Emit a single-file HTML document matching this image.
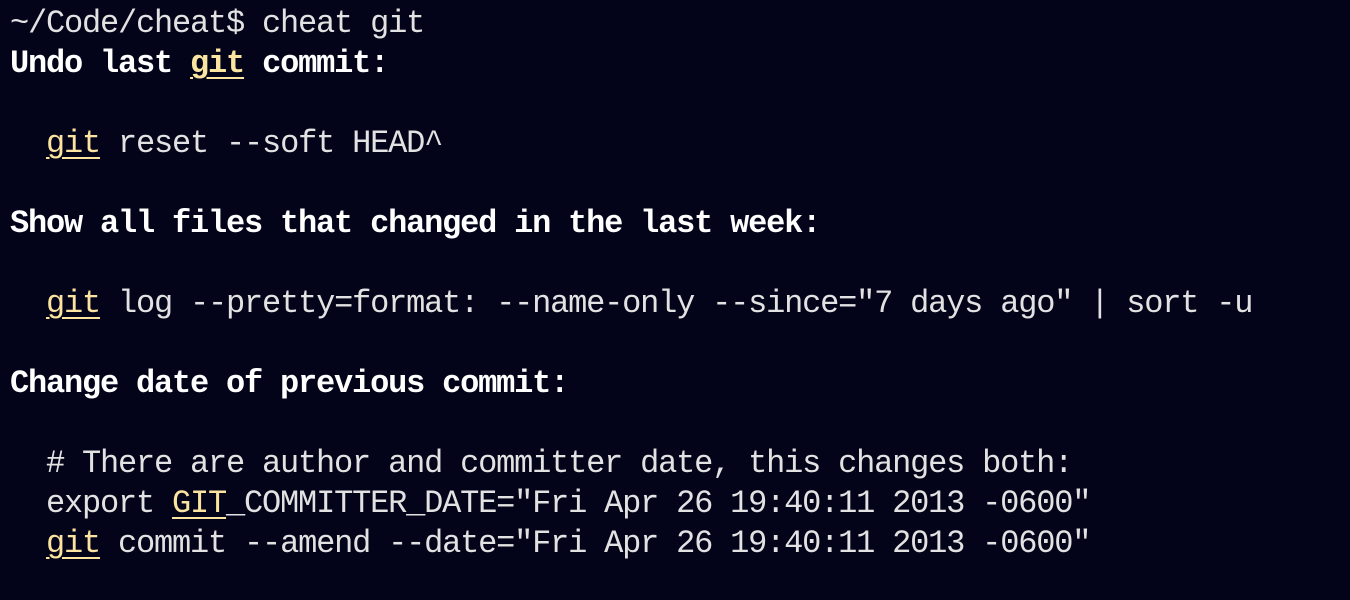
<!DOCTYPE html>
<html><head><meta charset="utf-8"><style>
html,body{margin:0;padding:0;background:#03031a;width:1350px;height:600px;overflow:hidden}
pre{margin:0;position:absolute;left:10px;top:4px;font-family:"Liberation Mono",monospace;font-size:32px;line-height:40px;color:#e2e2e2;letter-spacing:-1.2px}
b{color:#fff;font-weight:bold}
u{color:#fbe3a0;text-decoration:underline;text-underline-offset:5px;text-decoration-thickness:2px}
</style></head><body><pre>~/Code/cheat$ cheat git
<b>Undo last <u>git</u> commit:</b>

  <u>git</u> reset --soft HEAD^

<b>Show all files that changed in the last week:</b>

  <u>git</u> log --pretty=format: --name-only --since="7 days ago" | sort -u

<b>Change date of previous commit:</b>

  # There are author and committer date, this changes both:
  export <u>GIT</u>_COMMITTER_DATE="Fri Apr 26 19:40:11 2013 -0600"
  <u>git</u> commit --amend --date="Fri Apr 26 19:40:11 2013 -0600"</pre></body></html>
